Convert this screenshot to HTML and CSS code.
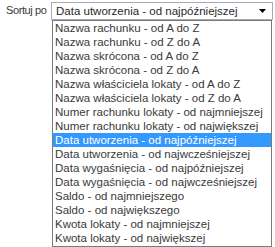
FILE: index.html
```html
<!DOCTYPE html>
<html lang="pl">
<head>
<meta charset="utf-8">
<link rel="stylesheet" href="styles.css">
</head>
<body>
<div class="sort">
  <span class="label">Sortuj po</span>
  <div class="selectwrap">
    <div class="select">
      <span class="value">Data utworzenia - od najpóźniejszej</span>
      <svg class="arrow" width="7" height="4" viewBox="0 0 7 4"><path d="M0 0H7L3.5 4Z" fill="#000"/></svg>
    </div>
    <ul class="list">
      <li>Nazwa rachunku - od A do Z</li>
      <li>Nazwa rachunku - od Z do A</li>
      <li>Nazwa skrócona - od A do Z</li>
      <li>Nazwa skrócona - od Z do A</li>
      <li>Nazwa właściciela lokaty - od A do Z</li>
      <li>Nazwa właściciela lokaty - od Z do A</li>
      <li>Numer rachunku lokaty - od najmniejszej</li>
      <li>Numer rachunku lokaty - od największej</li>
      <li class="active">Data utworzenia - od najpóźniejszej</li>
      <li>Data utworzenia - od najwcześniejszej</li>
      <li>Data wygaśnięcia - od najpóźniejszej</li>
      <li>Data wygaśnięcia - od najwcześniejszej</li>
      <li>Saldo - od najmniejszego</li>
      <li>Saldo - od największego</li>
      <li>Kwota lokaty - od najmniejszej</li>
      <li>Kwota lokaty - od największej</li>
    </ul>
  </div>
</div>
</body>
</html>
```
FILE: styles.css
```css
html, body {
  margin: 0;
  padding: 0;
  background: #fff;
  overflow: hidden;
}
body {
  font-family: "Liberation Sans", Arial, sans-serif;
  font-size: 11.5px;
  color: #3a3a3a;
}
.sort {
  display: flex;
  align-items: flex-start;
  padding: 2px 0 0 6px;
}
.label {
  flex: 0 0 45px;
  white-space: nowrap;
  line-height: 16px;
  font-size: 11px;
  letter-spacing: -0.4px;
  color: #3a3a3a;
}
.selectwrap {
  flex: 0 0 222px;
  min-width: 0;
}
.select {
  height: 16px;
  border: 1px solid #a5acb5;
  display: flex;
  align-items: center;
  justify-content: space-between;
  padding: 0 6px 0 4px;
  overflow: hidden;
}
.value {
  color: #2a2a2a;
  white-space: nowrap;
}
.arrow {
  display: block;
  flex: none;
}
.list {
  list-style: none;
  margin: 0 1px;
  padding: 0 0 1px;
  border: 1px solid #7a7a7a;
  overflow: hidden;
}
.list li {
  height: 14px;
  line-height: 14px;
  padding-left: 2px;
  white-space: nowrap;
}
.list li.active {
  background: #3399ff;
  color: #fff;
}
```
